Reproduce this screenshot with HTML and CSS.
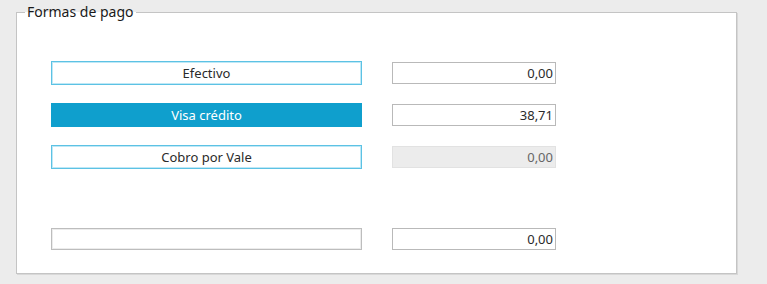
FILE: index.html
```html
<!DOCTYPE html>
<html lang="es">
<head>
<meta charset="utf-8">
<title>Formas de pago</title>
<link rel="stylesheet" href="styles.css">
</head>
<body>
<fieldset class="group">
  <legend class="group-title">Formas de pago</legend>
  <div class="rows">
    <div class="pay-btn">Efectivo</div>
    <div class="amount">0,00</div>
    <div class="pay-btn pay-btn--active">Visa crédito</div>
    <div class="amount">38,71</div>
    <div class="pay-btn">Cobro por Vale</div>
    <div class="amount amount--disabled">0,00</div>
    <div class="spacer"></div>
    <div class="spacer"></div>
    <div class="pay-btn pay-btn--empty"></div>
    <div class="amount">0,00</div>
  </div>
</fieldset>
</body>
</html>
```

FILE: styles.css
```css
html, body {
  margin: 0;
  padding: 0;
}
body {
  background: #ececec;
  font-family: "Noto Sans", "Open Sans", sans-serif;
  color: #2a2a2a;
  padding-top: 3px;
  height: 281px;
}
.group {
  margin: 0 30px 0 16px;
  padding: 0 0 23px 0;
  border: 1px solid #c4c4c4;
  background: #fff;
  box-shadow: 1px 1px 0 #d8d8d8;
}
.group-title {
  font-size: 14px;
  line-height: 18px;
  color: #1a1a1a;
  padding: 0 2px;
  margin-left: 8px;
}
.rows {
  display: grid;
  grid-template-columns: 311px 164px;
  grid-template-rows: 24px 24px 24px 23px 22px;
  column-gap: 30px;
  row-gap: 18px;
  align-items: center;
  margin-left: 34px;
  padding-top: 40px;
}
.pay-btn {
  box-sizing: border-box;
  height: 24px;
  border: 1px solid #5cc2e4;
  box-shadow: inset 0 0 0 1px #bfe8f6;
  font-size: 13px;
  line-height: 22px;
  text-align: center;
  color: #2a2a2a;
}
.pay-btn--active {
  background: #0f9fcd;
  border-color: #0f9fcd;
  box-shadow: none;
  color: #fff;
}
.pay-btn--empty {
  height: 22px;
  border-color: #bdbdbd;
  box-shadow: inset 0 0 0 1px #ececec;
}
.amount {
  box-sizing: border-box;
  height: 22px;
  border: 1px solid #b9b9b9;
  font-size: 13px;
  line-height: 20px;
  text-align: right;
  padding-right: 2px;
  color: #2a2a2a;
  background: #fff;
}
.amount--disabled {
  background: #ececec;
  border-color: #e2e2e2;
  color: #666;
}
.spacer {
  height: 23px;
}
```
